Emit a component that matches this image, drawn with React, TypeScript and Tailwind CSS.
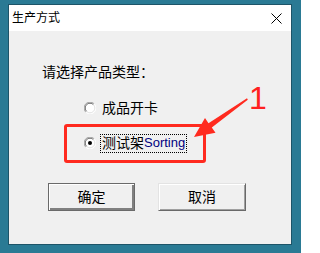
import React from "react";

function Radio({ checked }: { checked?: boolean }) {
  return (
    <svg width="12" height="12" viewBox="0 0 12 12" className="shrink-0">
      <circle cx="6" cy="6" r="5.5" fill="#ffffff" />
      <path d="M1.8 10.2 A5.5 5.5 0 0 1 10.2 1.8" fill="none" stroke="#a0a0a0" strokeWidth="1" />
      <path d="M10.2 1.8 A5.5 5.5 0 0 1 1.8 10.2" fill="none" stroke="#ffffff" strokeWidth="1" />
      <path d="M2.6 9.4 A4.5 4.5 0 0 1 9.4 2.6" fill="none" stroke="#696969" strokeWidth="1" />
      <path d="M9.4 2.6 A4.5 4.5 0 0 1 2.6 9.4" fill="none" stroke="#e3e3e3" strokeWidth="1" />
      {checked && <circle cx="6" cy="6" r="2" fill="#000000" />}
    </svg>
  );
}

export default function App() {
  const font = { fontFamily: '"Liberation Sans", "Noto Sans CJK SC", sans-serif' };
  return (
    <div
      className="relative w-[301px] h-[253px] overflow-hidden bg-[#2a7a94] pl-[8px] pt-[4px]"
      style={font}
    >
      <div className="w-[284px] h-[241px] border border-[#1d5468] flex flex-col">
        <div className="h-[26px] bg-white flex items-center justify-between pl-[3px] pr-[9px]">
          <span className="text-[12px] leading-none text-black">生产方式</span>
          <svg width="11" height="11" viewBox="0 0 11 11">
            <path d="M0.5 0.5 L10.5 10.5 M10.5 0.5 L0.5 10.5" stroke="#000" strokeWidth="1" />
          </svg>
        </div>
        <div className="flex-1 bg-[#f0f0f0] flex flex-col pl-[33px] pt-[33px]">
          <div className="text-[14px] leading-[16px] text-black">请选择产品类型：</div>
          <div className="mt-[18px] ml-[42px] h-[20px] flex items-center">
            <Radio />
            <span className="ml-[6px] text-[14px] leading-[16px] text-black">成品开卡</span>
          </div>
          <div className="mt-[15px] ml-[42px] h-[20px] flex items-center">
            <Radio checked />
            <span className="ml-[4px] h-[19px] px-[1px] flex items-center border border-dotted border-black text-[14px] leading-[16px] text-black">
              测试架<span className="text-[13px] text-[#000080]">Sorting</span>
            </span>
          </div>
          <div className="mt-[30px] ml-[6px] flex gap-[23px]">
            <button className="w-[87px] h-[28px] border border-[#6a6a6a] bg-[#f0f0f0] shadow-[inset_1px_1px_0_#ffffff,inset_-2px_-2px_0_#808080] text-[14px] leading-none text-black flex items-center justify-center pb-[1px]">
              确定
            </button>
            <button className="w-[88px] h-[28px] border border-t-[#e3e3e3] border-l-[#e3e3e3] border-r-[#696969] border-b-[#696969] bg-[#f0f0f0] shadow-[inset_1px_1px_0_#ffffff,inset_-1px_-1px_0_#a0a0a0] text-[14px] leading-none text-black flex items-center justify-center pb-[1px]">
              取消
            </button>
          </div>
        </div>
      </div>

      {/* annotation: red box */}
      <div className="absolute left-[64px] top-[124px] w-[142px] h-[39px] border-[3px] border-[#ff2a1f] rounded-[3px] pointer-events-none" />
      {/* annotation: arrow */}
      <svg className="absolute left-0 top-0 pointer-events-none" width="301" height="253" viewBox="0 0 301 253">
        <polygon
          points="194,137 205,118 208.5,123.2 247,98.3 247.8,99.7 211.8,127.6 215.5,132.8"
          fill="#ff2a1f"
        />
      </svg>
      {/* annotation: number */}
      <div className="absolute left-[249px] top-[82px] text-[32px] leading-none text-[#ff2020]" style={{ fontFamily: '"Liberation Sans", sans-serif' }}>
        1
      </div>
    </div>
  );
}
